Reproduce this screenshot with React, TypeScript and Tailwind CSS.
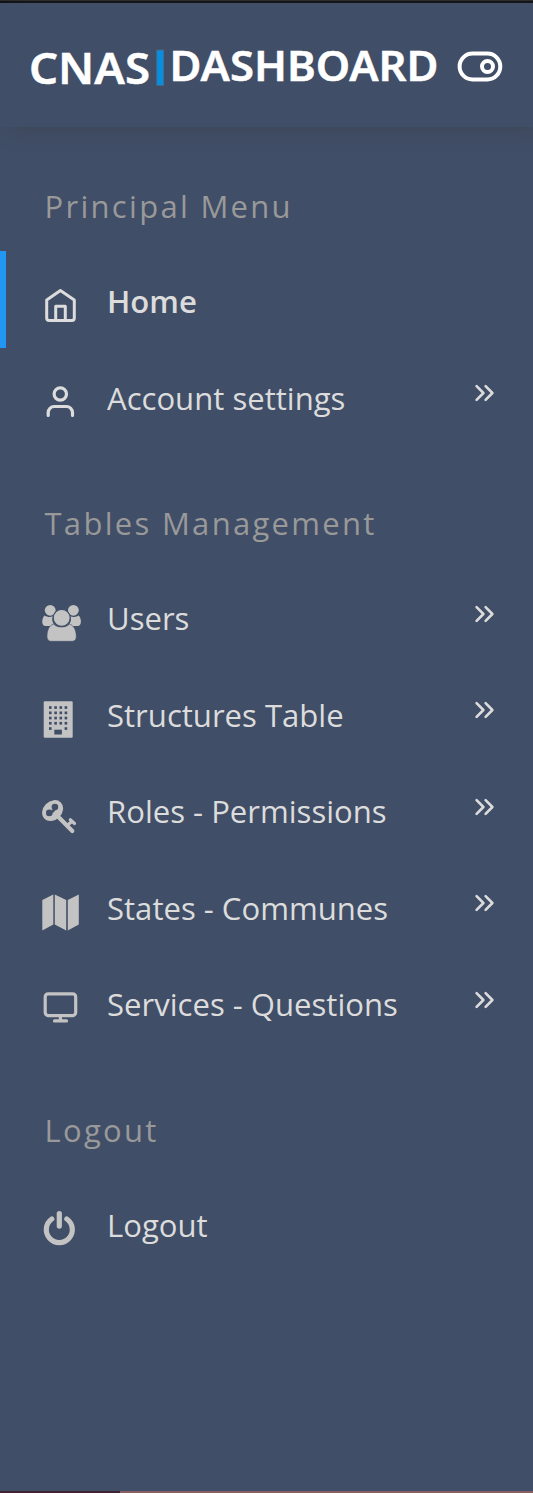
import type { ReactNode } from "react";

const HomeIcon = () => (
  <g fill="none" stroke="currentColor" strokeWidth="3" strokeLinejoin="round">
    <path d="M6.7 17 20.4 7.6 34.3 17V34.9a2.5 2.5 0 0 1-2.5 2.5H9.2a2.5 2.5 0 0 1-2.5-2.5Z" />
    <path d="M15.7 37V23.3h9.6V37" />
  </g>
);

const UserIcon = () => (
  <g fill="none" stroke="currentColor" strokeWidth="3.2" strokeLinecap="round">
    <circle cx="20.3" cy="14" r="6.2" />
    <path d="M8.2 35.5V32.5a6 6 0 0 1 6-6h12.3a6 6 0 0 1 6 6v3" />
  </g>
);

const GroupIcon = () => (
  <g fill="currentColor">
    <circle cx="10.2" cy="10.3" r="5.4" />
    <circle cx="33.4" cy="10.3" r="5.4" />
    <path d="M4.5 15.5c3 1.800 6 1.800 8.300.8-1.500 4 .2 7.500 2.700 9.700H5.500C1.200 26 1.500 18.500 4.500 15.500Z" />
    <path d="M38.700 15.500c-3 1.800-6 1.800-8.300.8 1.500 4-.2 7.500-2.700 9.700h10C42 26 41.700 18.500 38.700 15.500Z" />
    <path
      d="M13.500 24.200c4.500 3.800 11.500 3.800 16 0 4.500 1 6.800 6.500 6.800 12.300 0 3-1.500 4.800-4 4.800H11c-2.500 0-4-1.800-4-4.800 0-5.800 2-11.300 6.500-12.300Z"
      stroke="#404e67"
      strokeWidth="0.6"
    />
    <circle cx="21.700" cy="17.900" r="8.500" stroke="#404e67" strokeWidth="1.100" />
  </g>
);

const BuildingIcon = () => (
  <g fill="currentColor">
    <rect x="3.700" y="4.200" width="29" height="36.500" rx="1.200" />
    <g fill="#404e67">
      {[9.2, 14.5, 19.7, 24.9, 30.2].map((y, row) =>
        [9, 14.3, 19.5, 24.600].map((x, col) =>
          row === 4 && (col === 1 || col === 2) ? null : (
            <rect key={`${x}-${y}`} x={x} y={y} width="2.600" height="2.700" />
          ),
        ),
      )}
      <rect x="14.300" y="32.700" width="7.600" height="4.800" />
    </g>
  </g>
);

const KeyIcon = () => (
  <g fill="currentColor">
    <ellipse cx="12.600" cy="17.600" rx="11.600" ry="9.300" transform="rotate(-45 12.600 17.600)" />
    <g fill="none" stroke="currentColor">
      <path d="M17 22.500 32.300 38" strokeWidth="4.200" strokeLinecap="round" />
      <path d="m27.300 32.300 5.500-4.500" strokeWidth="3.200" />
      <path d="m30.300 26.800 4.200 3.700" strokeWidth="3.200" strokeLinecap="round" />
    </g>
    <g fill="#404e67">
      <circle cx="9.300" cy="19.900" r="3.300" />
      <circle cx="14.900" cy="14" r="3.300" />
      <path d="m11.800 16.700 4.500-.5-3.800 4.400Z" />
    </g>
  </g>
);

const MapIcon = () => (
  <g fill="currentColor">
    <path d="M2.300 10 13.300 4.400V34.600L2.300 40.400Z" />
    <path d="M14.800 4.400 26.200 10V40.400L14.800 34.600Z" />
    <path d="M27.800 10 38.800 4.400V34.600L27.800 40.400Z" />
  </g>
);

const MonitorIcon = () => (
  <g fill="none" stroke="currentColor" strokeWidth="3.200" strokeLinecap="round">
    <rect x="5.200" y="7.800" width="30.500" height="21.800" rx="3" />
    <path d="M20.400 30v4.800M14.500 34.900h12" />
  </g>
);

const PowerIcon = () => (
  <g fill="none" stroke="currentColor" strokeWidth="5.200" strokeLinecap="round">
    <path d="M11.800 12a13 13 0 1 0 15 0" />
    <path d="M19.300 6.500v12.600" />
  </g>
);

const Chevrons = () => (
  <svg
    className="mt-[35.500px] h-5 w-6 shrink-0"
    viewBox="0 0 24 20"
    fill="none"
    stroke="#dcdcdc"
    strokeWidth="2.600"
    strokeLinecap="round"
    strokeLinejoin="round"
  >
    <path d="m3.600 3.200 6.800 6.800-6.800 6.800M12.600 3.200l6.800 6.800-6.800 6.800" />
  </svg>
);

type Item = { label: string; icon: ReactNode; active?: boolean; more?: boolean; light?: boolean };

const sections: { title: string; items: Item[] }[] = [
  {
    title: "Principal Menu",
    items: [
      { label: "Home", icon: <HomeIcon />, active: true, light: true },
      { label: "Account settings", icon: <UserIcon />, more: true, light: true },
    ],
  },
  {
    title: "Tables Management",
    items: [
      { label: "Users", icon: <GroupIcon />, more: true },
      { label: "Structures Table", icon: <BuildingIcon />, more: true },
      { label: "Roles - Permissions", icon: <KeyIcon />, more: true },
      { label: "States - Communes", icon: <MapIcon />, more: true },
      { label: "Services - Questions", icon: <MonitorIcon />, more: true },
    ],
  },
  { title: "Logout", items: [{ label: "Logout", icon: <PowerIcon /> }] },
];

const MenuItem = ({ label, icon, active, more, light }: Item) => (
  <li>
    <a
      href="#"
      className={`flex h-[96.5px] items-start border-l-[6px] pr-[36px] pl-[34px] ${
        active ? "border-[#2196f3] font-semibold" : "border-transparent"
      }`}
    >
      <svg
        className={`mt-8 h-11 w-11 shrink-0 ${light ? "text-[#dcdcdc]" : "text-[#c3c3c3]"}`}
        viewBox="0 0 44 44"
      >
        {icon}
      </svg>
      <span className="ml-[23px] flex-1 whitespace-nowrap text-[31.080px] leading-[100px] text-[#dcdcdc]">
        {label}
      </span>
      {more && <Chevrons />}
    </a>
  </li>
);

export default function App() {
  return (
    <div className="flex h-[1493px] w-full flex-col overflow-hidden bg-[#404e67] font-['Open_Sans',sans-serif]">
      <div className="h-[3px] shrink-0 border-t border-[#2b2b2d] bg-[#111214]" />
      <header className="flex h-[124px] shrink-0 items-start bg-[#404e67] shadow-[8px_4px_18px_rgba(60,60,60,0.35)]">
        <svg className="mt-[17px] ml-[20px] h-[90px] w-[426px]" viewBox="20 20 426 90" fill="#ffffff">
          <text
            className="font-['Noto_Sans',sans-serif]"
            x="29"
            y="83.500"
            fontSize="43.500"
            fontWeight="600"
            stroke="#ffffff"
            strokeWidth="0.500"
            textLength="121"
            lengthAdjust="spacingAndGlyphs"
          >
            CNAS
          </text>
          <rect x="156.800" y="50" width="6.900" height="35.300" fill="#058fe2" stroke="#53677c" strokeWidth="0.8" />
          <text
            className="font-['Noto_Sans',sans-serif]"
            x="169.500"
            y="81.200"
            fontSize="41.500"
            fontWeight="600"
            stroke="#ffffff"
            strokeWidth="0.500"
            textLength="269"
            lengthAdjust="spacingAndGlyphs"
          >
            DASHBOARD
          </text>
        </svg>
        <svg
          className="mt-[47px] ml-[10px] h-[34px] w-[48px]"
          viewBox="0 0 48 34"
          fill="none"
          stroke="#ffffff"
          strokeWidth="4"
        >
          <rect x="3.600" y="3.600" width="40.700" height="25.800" rx="12.900" />
          <circle cx="31.500" cy="16.500" r="5.500" />
        </svg>
      </header>
      <nav className="flex-1">
        {sections.map((section) => (
          <section key={section.title}>
            <h2 className="h-[124px] pl-[44.500px] text-[31px] leading-[158px] tracking-[2.300px] text-[#999999]">
              {section.title}
            </h2>
            <ul>
              {section.items.map((item) => (
                <MenuItem key={item.label} {...item} />
              ))}
            </ul>
          </section>
        ))}
      </nav>
      <div className="flex h-[2px] shrink-0">
        <div className="w-[120px] bg-[#402330]" />
        <div className="flex-1 bg-[#8b6062]" />
      </div>
    </div>
  );
}
